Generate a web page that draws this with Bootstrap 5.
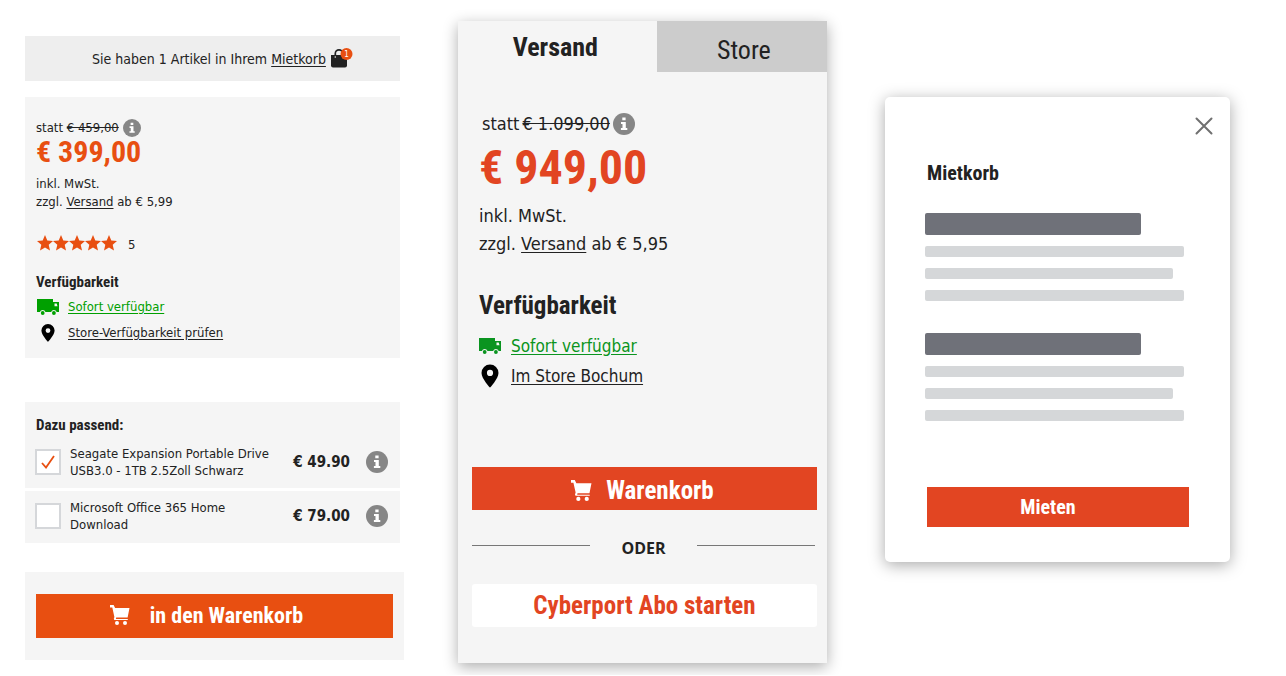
<!doctype html>
<html lang="de">
<head>
<meta charset="utf-8">
<meta name="viewport" content="width=device-width, initial-scale=1">
<title>Warenkorb und Mietkorb</title>
<link href="https://cdn.jsdelivr.net/npm/bootstrap@5.3.0/dist/css/bootstrap.min.css" rel="stylesheet">
<style>
:root { --ink: #222; --orange: #e84f11; --red: #e24522; --green: #00a000; --panel: #f5f5f5; }
body { font-family: "DejaVu Sans Condensed", "DejaVu Sans", sans-serif; font-size: 13px; line-height: 18px; color: var(--ink); background: #fff; }
a { color: inherit; text-underline-offset: 2px; }
a:hover { color: var(--orange); }
svg { display: block; flex: none; }
.cond { font-family: "Roboto Condensed", Roboto, sans-serif; font-weight: 700; }
.board { display: grid; grid-template-columns: 379fr 373fr 345fr; column-gap: 54px; padding: 21px 56px 12px 25px; align-items: start; }
.info-btn { border: 0; padding: 0; background: none; color: #868686; }
.cta { border: 0; border-radius: 0; color: #fff; background: var(--red); }
.cta:hover { color: #fff; background: #c93c1c; }

/* product column */
.product { padding-top: 15px; }
.narrow { margin-right: 4px; }
.notice { height: 45px; background: #eee; font-size: 14px; padding-left: 20px; gap: 5px; }
.offer { background: var(--panel); margin-top: 16px; padding: 22px 11px 12px; }
.was { font-size: 13px; }
.price { color: var(--orange); font-size: 30px; line-height: 30px; margin-bottom: 8px; }
.stars { color: var(--orange); height: 20px; margin: 22px 0 19px; padding-left: 1px; font-size: 13px; }
.stars-count { color: var(--ink); margin-left: 11px; padding-top: 3px; }
.sub { font-size: 15px; line-height: 20px; margin: 0; }
.offer .sub { margin-bottom: 2px; }
.avail { height: 26px; gap: 8px; }
.avail-icon { width: 24px; display: flex; justify-content: center; flex: none; }
.green { color: var(--green); }
.extras { margin-top: 44px; }
.extras-head { background: var(--panel); padding: 13px 11px 0; }
.extra { background: var(--panel); padding: 10px 12px 9px 10px; line-height: 17px; }
.extra + .extra { margin-top: 3px; padding-top: 8px; padding-bottom: 10px; }
.extra label { margin-left: 9px; }
.extra-price { font-weight: 700; font-size: 15px; margin-right: 16px; }
.extra .form-check-input { width: 26px; height: 26px; margin: 0; border: 2px solid #d5d7da; border-radius: 0; background-color: #fff; flex: none; }
.extra .form-check-input:checked { background-color: #fff; background-size: contain; background-image: url("data:image/svg+xml,%3Csvg xmlns='http://www.w3.org/2000/svg' viewBox='0 0 22 22'%3E%3Cpath d='M5 12l4 4.5L17 5' fill='none' stroke='%23e84f11' stroke-width='1.8'/%3E%3C/svg%3E"); }
.buy { background: var(--panel); margin-top: 29px; padding: 22px 11px; }
.buy .cta { height: 44px; background: var(--orange); font-size: 22px; gap: 20px; padding: 0 16px 2px 0; }

/* delivery panel */
.delivery { background: var(--panel); box-shadow: 0 4px 14px rgba(0,0,0,.32); padding-bottom: 36px; margin-right: 4px; font-size: 18px; line-height: 28px; }
.tab { border: 0; height: 51px; font-size: 26px; color: var(--ink); background: none; flex: 170 1 0; padding: 0; }
.tab.active { flex-grow: 199; padding-right: 4px; }
.tab.other { background: #ccc; font-weight: 400; padding: 6px 0 0 4px; }
.detail { padding: 38px 21px 0; }
.detail .was { font-size: 18px; line-height: 28px; gap: 3px; padding-left: 3px; }
.detail .price { color: var(--red); font-size: 48px; line-height: 56px; margin: 2px 0 6px; }
.detail .sub { font-size: 25px; line-height: 32px; margin: 32px 0 9px; }
.detail .avail { height: 30px; font-size: 17px; gap: 10px; }
.detail .avail-icon { width: 22px; }
.detail .green { color: #0a9420; }
.choose { padding: 76px 10px 0 14px; }
.choose .btn { height: 43px; font-size: 25px; padding: 0; border: 0; }
.choose .cta { gap: 14px; padding: 4px 4px 0 0; }
.or { font-family: "Open Sans", "Noto Sans", sans-serif; font-weight: 700; font-size: 16px; gap: 31px; height: 74px; padding: 1px 2px 0 0; }
.or hr { margin: 0 0 4px; border-color: #777; opacity: 1; flex: 1; }
.abo { background: #fff; color: var(--red); border-radius: 3px; }

/* rental dialog */
.rental { background: #fff; border-radius: 5px; box-shadow: 0 3px 16px rgba(0,0,0,.34); margin-top: 76px; padding: 18px 41px 35px 40px; }
.shut { border: 0; background: none; padding: 0; color: #707070; margin: 0 -24px 0 auto; display: block; }
.rental h2 { font-size: 20px; line-height: 24px; margin: 24px 2px 28px; }
.ph { display: grid; row-gap: 11px; margin-bottom: 32px; }
.ph span { height: 11px; background: #d5d7d9; border-radius: 2px; width: 98%; }
.ph .ph-title { height: 22px; width: 82%; background: #6f7179; }
.ph .ph-short { width: 94%; }
.rental .cta { height: 40px; font-size: 20px; margin: 34px 0 0 2px; padding: 0 20px 0 0; width: calc(100% - 2px); }

@media (max-width: 1000px) {
  .board { grid-template-columns: minmax(0, 440px); justify-content: center; row-gap: 32px; padding: 16px; }
  .rental { margin-top: 0; }
}
</style>
</head>
<body>
<svg width="0" height="0" class="position-absolute" aria-hidden="true">
  <symbol id="i-info" viewBox="0 0 22 22"><circle cx="11" cy="11" r="11" fill="currentColor"/><path d="M9.300 4.600h3.300v2.700H9.300zM8 9h4.800v6h1.500v1.900H7.900V15h1.600v-4H8z" fill="#fff"/></symbol>
  <symbol id="i-truck" viewBox="0 0 22 16"><path d="M0 0h16v3h6V13h-2.300a3 3 0 0 0-5.600 0H8.500a3 3 0 0 0-5.600 0H0z" fill="currentColor"/><path d="M17.500 4.500h2.200l.8 2.700h-3z" fill="#f5f5f5"/><circle cx="5.700" cy="14" r="1.900" fill="currentColor"/><circle cx="16.900" cy="14" r="1.900" fill="currentColor"/></symbol>
  <symbol id="i-pin" viewBox="0 0 14 18"><path fill="#000" fill-rule="evenodd" d="M7 0a6.600 6.600 0 0 0-6.600 6.600C.4 11 7 18 7 18s6.600-7 6.600-11.400A6.600 6.600 0 0 0 7 0zm0 4.200a2.400 2.400 0 1 1 0 4.800 2.400 2.400 0 0 1 0-4.800z"/></symbol>
  <symbol id="i-cart" viewBox="0 0 20 20"><path d="M0 0h3.600l1.500 3H19.500L17.600 12.500H6.200L5.900 14H17.800V15H4.300L3.800 13.800 4.400 12 2.300 2.500H0z" fill="currentColor"/><circle cx="7" cy="18" r="2" fill="currentColor"/><circle cx="15" cy="18" r="2" fill="currentColor"/></symbol>
  <symbol id="i-star" viewBox="0 0 16 16"><path d="M8 0l2.300 5.400 5.700.5-4.300 3.900L13 15.500 8 12.500l-5 3 1.300-5.700L0 5.900l5.700-.5z" fill="currentColor"/></symbol>
</svg>

<main class="board">
  <section class="product">
    <div class="notice narrow d-flex align-items-center justify-content-center">
      <span>Sie haben 1 Artikel in Ihrem <a href="#mietkorb">Mietkorb</a></span>
      <svg width="22" height="22" viewBox="0 0 22 22" aria-hidden="true"><path d="M0 7h16V17.500a2 2 0 0 1-2 2H2a2 2 0 0 1-2-2z" fill="#222"/><path d="M4.300 9V5.500a3.700 3.700 0 0 1 7.400 0v2" fill="none" stroke="#222" stroke-width="1.700"/><circle cx="4.300" cy="9" r=".8" fill="#eee"/><circle cx="15.500" cy="6" r="6" fill="#e84f11"/><text x="15.500" y="9" text-anchor="middle" font-size="8" fill="#fff">1</text></svg>
    </div>

    <div class="offer narrow">
      <div class="was d-flex align-items-center"><span>statt <s>€ 459,00</s></span><button class="info-btn ms-1" type="button" aria-label="Preisinfo"><svg width="18" height="18"><use href="#i-info"/></svg></button></div>
      <div class="price cond">€ 399,00</div>
      <div>inkl. MwSt.</div>
      <div>zzgl. <a href="#versand">Versand</a> ab € 5,99</div>
      <div class="stars d-flex align-items-center">
        <svg width="16" height="16"><use href="#i-star"/></svg><svg width="16" height="16"><use href="#i-star"/></svg><svg width="16" height="16"><use href="#i-star"/></svg><svg width="16" height="16"><use href="#i-star"/></svg><svg width="16" height="16"><use href="#i-star"/></svg>
        <span class="stars-count">5</span>
      </div>
      <h2 class="sub cond">Verfügbarkeit</h2>
      <div class="avail green d-flex align-items-center"><span class="avail-icon"><svg width="22" height="16"><use href="#i-truck"/></svg></span><a href="#lieferung">Sofort verfügbar</a></div>
      <div class="avail d-flex align-items-center"><span class="avail-icon"><svg width="14" height="18"><use href="#i-pin"/></svg></span><a href="#stores">Store-Verfügbarkeit prüfen</a></div>
    </div>

    <div class="extras narrow">
      <div class="extras-head"><h2 class="sub cond">Dazu passend:</h2></div>
      <div class="extra d-flex align-items-center">
        <input class="form-check-input" type="checkbox" id="x1" checked>
        <label for="x1" class="flex-grow-1">Seagate Expansion Portable Drive<br>USB3.0 - 1TB 2.5Zoll Schwarz</label>
        <span class="extra-price">€ 49.90</span>
        <button class="info-btn" type="button" aria-label="Info Seagate"><svg width="22" height="22"><use href="#i-info"/></svg></button>
      </div>
      <div class="extra d-flex align-items-center">
        <input class="form-check-input" type="checkbox" id="x2">
        <label for="x2" class="flex-grow-1">Microsoft Office 365 Home<br>Download</label>
        <span class="extra-price">€ 79.00</span>
        <button class="info-btn" type="button" aria-label="Info Office"><svg width="22" height="22"><use href="#i-info"/></svg></button>
      </div>
    </div>

    <div class="buy">
      <button type="button" class="btn cta cond w-100 d-flex align-items-center justify-content-center"><svg width="20" height="20"><use href="#i-cart"/></svg>in den Warenkorb</button>
    </div>
  </section>

  <section class="delivery">
    <div class="d-flex" role="tablist">
      <button type="button" class="tab active cond" role="tab" aria-selected="true">Versand</button>
      <button type="button" class="tab other cond" role="tab" aria-selected="false">Store</button>
    </div>
    <div class="detail">
      <div class="was d-flex align-items-center"><span>statt</span><s>€ 1.099,00</s><button class="info-btn" type="button" aria-label="Preisinfo"><svg width="22" height="22"><use href="#i-info"/></svg></button></div>
      <div class="price cond">€ 949,00</div>
      <div>inkl. MwSt.</div>
      <div>zzgl. <a href="#versand">Versand</a> ab € 5,95</div>
      <h2 class="sub cond">Verfügbarkeit</h2>
      <div class="avail green d-flex align-items-center"><span class="avail-icon"><svg width="22" height="16"><use href="#i-truck"/></svg></span><a href="#lieferung">Sofort verfügbar</a></div>
      <div class="avail d-flex align-items-center"><span class="avail-icon"><svg width="18" height="24"><use href="#i-pin"/></svg></span><a href="#bochum">Im Store Bochum</a></div>
    </div>
    <div class="choose">
      <button type="button" class="btn cta cond w-100 d-flex align-items-center justify-content-center"><svg width="21" height="21"><use href="#i-cart"/></svg>Warenkorb</button>
      <div class="or d-flex align-items-center"><hr>ODER<hr></div>
      <button type="button" class="btn abo cond w-100">Cyberport Abo starten</button>
    </div>
  </section>

  <section class="rental" id="mietkorb">
    <button type="button" class="shut" aria-label="Schließen"><svg width="18" height="22" viewBox="0 0 18 22"><path d="M1.500 3.500l15 15m0-15l-15 15" stroke="currentColor" stroke-width="2" stroke-linecap="round"/></svg></button>
    <h2 class="cond">Mietkorb</h2>
    <div class="ph"><span class="ph-title"></span><span></span><span class="ph-short"></span><span></span></div>
    <div class="ph"><span class="ph-title"></span><span></span><span class="ph-short"></span><span></span></div>
    <button type="button" class="btn cta cond">Mieten</button>
  </section>
</main>
<script src="https://cdn.jsdelivr.net/npm/bootstrap@5.3.0/dist/js/bootstrap.bundle.min.js"></script>
</body>
</html>
